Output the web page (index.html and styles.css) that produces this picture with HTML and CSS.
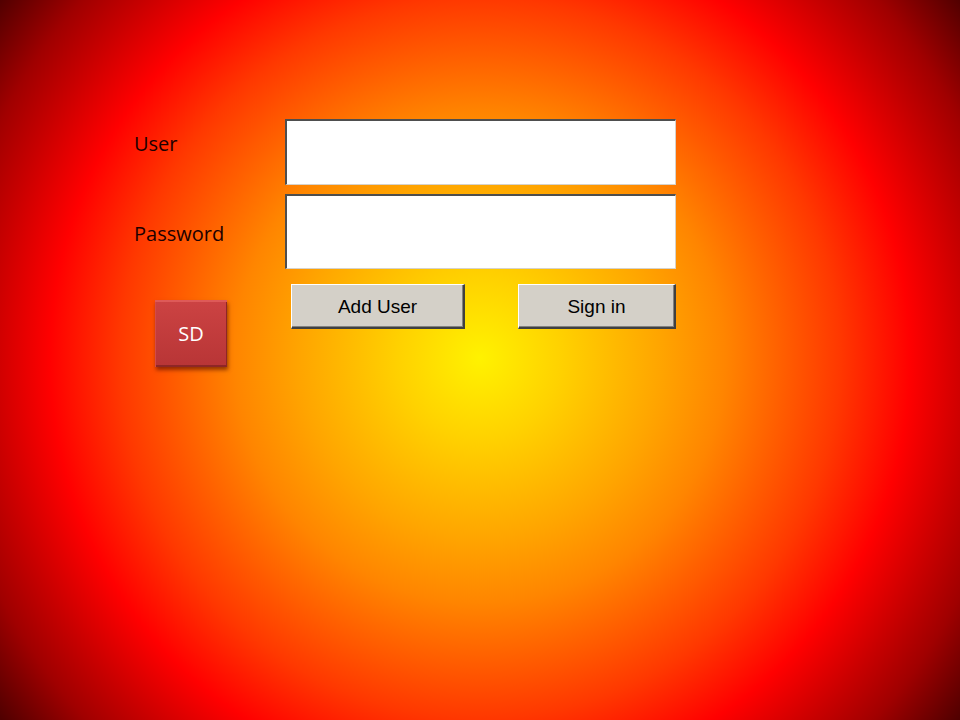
FILE: index.html
```html
<!DOCTYPE html>
<html lang="en">
<head>
  <meta charset="UTF-8">
  <title>Login</title>
  <link rel="stylesheet" href="styles.css">
</head>
<body>
  <div class="login">
    <label class="label label-user" for="user">User</label>
    <input type="text" class="field field-user" id="user" />

    <label class="label label-pass" for="password">Password</label>
    <input type="password" class="field field-pass" id="password" />

    <div class="sd-cell">
      <button class="sd" id="sd">SD</button>
    </div>
    <div class="actions">
      <button class="win-btn add-user" id="addUser">Add User</button>
      <button class="win-btn sign-in" id="signIn">Sign in</button>
    </div>
  </div>
</body>
</html>
```

FILE: styles.css
```css
html, body {
  margin: 0;
  height: 100%;
}
body {
  font-family: "Open Sans", "Noto Sans", sans-serif;
  background: radial-gradient(circle at 480px 358px,
    #fff200 0,
    #ffd200 80px,
    #ffa500 180px,
    #ff8500 245px,
    #ff6000 300px,
    #ff3800 360px,
    #ff0000 430px,
    #c80000 490px,
    #a00000 535px,
    #500000 600px);
  background-color: #500000;
  overflow: hidden;
}
.login {
  display: grid;
  grid-template-columns: 151px 391px;
  grid-template-rows: 66px 75px 45px;
  row-gap: 9px;
  padding: 119px 0 0 134px;
}
.label {
  font-size: 20px;
  line-height: 24px;
  color: #1c0000;
}
.label-user {
  padding-top: 13px;
}
.label-pass {
  padding-top: 28px;
}
.field {
  box-sizing: border-box;
  width: 100%;
  height: 100%;
  margin: 0;
  background: #fff;
  border-top: 2px solid #4e4e4e;
  border-left: 2px solid #4e4e4e;
  border-right: 1px solid #d6d2ca;
  border-bottom: 1px solid #d6d2ca;
  outline: none;
  font-size: 18px;
  padding: 0 6px;
}
.field-pass {
  grid-row: 2;
  grid-column: 2;
}
.sd-cell {
  grid-row: 3;
  grid-column: 1;
  margin-top: 6px;
}
.actions {
  grid-row: 3;
  grid-column: 2;
  display: flex;
  justify-content: space-between;
  padding-left: 6px;
  margin-top: 6px;
}
.win-btn {
  box-sizing: border-box;
  height: 45px;
  background: #d4d0c8;
  border-top: 1px solid #ffffff;
  border-left: 1px solid #ffffff;
  border-right: 2px solid #404040;
  border-bottom: 2px solid #404040;
  box-shadow: inset -1px -1px 0 #808080;
  font-family: "Liberation Sans", Arial, sans-serif;
  font-size: 19px;
  color: #000;
  padding: 2px 0 0;
  cursor: pointer;
}
.add-user {
  width: 174px;
}
.sign-in {
  width: 158px;
}
.sd {
  box-sizing: border-box;
  width: 72px;
  height: 67px;
  margin: 16px 0 0 21px;
  border: none;
  background: linear-gradient(#cc4343, #b83536);
  box-shadow: inset 0 2px 0 #de5a58, inset 1px 0 0 #d24a4a, inset -1px -2px 0 #8e2626, 1px 3px 4px rgba(60, 0, 0, 0.55);
  color: #fff;
  font-family: "Open Sans", "Noto Sans", sans-serif;
  font-size: 20px;
  padding: 0;
  cursor: pointer;
}
```
